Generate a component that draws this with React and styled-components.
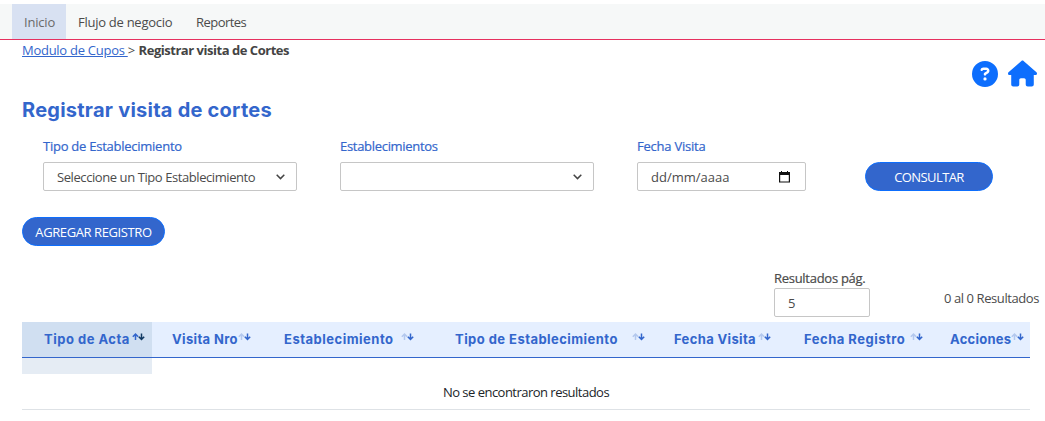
import React from "react";
import styled, { createGlobalStyle } from "styled-components";
import { FaCircleQuestion, FaHouse } from "react-icons/fa6";

const Global = createGlobalStyle`
  * { box-sizing: border-box; }
  body { margin: 0; background: #fff; color: #4b4b4b; font: 13px/18px "Open Sans", "Noto Sans", sans-serif; }
`;

const Page = styled.div`
  height: 421px;
  padding-top: 4px;
  overflow: hidden;
`;
const Label = styled.span`
  white-space: pre;
  letter-spacing: ${(p) => p.$ls || 0}px;
  -webkit-text-stroke: ${(p) => (p.$medium ? "0.2px currentColor" : "0")};
`;
const Nav = styled.nav`
  display: flex;
  height: 36px;
  padding-left: 12px;
  background: #f6f8f8;
  border-bottom: 1px solid #e6305f;
`;
const NavItem = styled.a`
  display: flex;
  align-items: center;
  padding: 1px 12px 0;
  width: ${(p) => p.$w}px;
  color: ${(p) => (p.$active ? "#6a6a6a" : "#4b4b4b")};
  background: ${(p) => (p.$active ? "#d8e1f2" : "transparent")};
`;
const Crumbs = styled.div`
  height: 20px;
  padding: 1px 0 0 22px;
  white-space: pre;
  a { color: #3366cc; text-decoration: underline; }
  b { color: #444; font-weight: 700; }
`;
const Icons = styled.div`
  display: flex;
  justify-content: flex-end;
  align-items: center;
  gap: 10px;
  height: 27px;
  padding-right: 8px;
  color: #0d6efd;
`;
const Title = styled.h1`
  margin: 13px 0 0 22px;
  font: 700 20px/20px Inter, sans-serif;
  color: #3366cc;
  height: 20px;
`;
const Filters = styled.div`
  display: flex;
  align-items: flex-end;
  margin: 17px 0 0 43px;
`;
const Field = styled.label`
  display: flex;
  flex-direction: column;
  gap: 7px;
  width: ${(p) => p.$w}px;
  margin-right: ${(p) => p.$gap}px;
  color: #3366cc;
`;
const Control = styled.div`
  display: flex;
  align-items: center;
  justify-content: space-between;
  width: ${(p) => p.$w || "100%"};
  height: 29px;
  padding: ${(p) => p.$pad || "0 11px 0 13px"};
  background: #fff;
  border: 1px solid #c6c6c6;
  border-radius: 2px;
  color: #4b4b4b;
`;
const Button = styled.button`
  display: flex;
  align-items: center;
  justify-content: center;
  width: ${(p) => p.$w}px;
  height: 29px;
  margin: ${(p) => p.$m || 0};
  padding: 1px 0 0;
  border: 1px solid #0d6efd;
  border-radius: 15px;
  background: #3366cc;
  color: #fff;
  font: 13px/18px "Open Sans", sans-serif;
`;
const Pager = styled.div`
  display: flex;
  justify-content: space-between;
  height: 53px;
  margin: 23px 6px 0 774px;
`;
const PageSize = styled.label`
  display: flex;
  flex-direction: column;
  gap: 1px;
`;
const Count = styled.div`
  padding-top: 20px;
`;
const Table = styled.div`
  width: 1008px;
  margin-left: 22px;
  border-bottom: 1px solid #dee2e6;
`;
const Head = styled.div`
  display: grid;
  grid-template-columns: 130px 112px 171px 219px 130px 146px 100px;
  height: 36px;
  background: #e5efff;
  border-bottom: 1px solid #3366cc;
`;
const HeadCell = styled.div`
  display: flex;
  justify-content: space-between;
  padding: 8px ${(p) => p.$pr}px 0 ${(p) => (p.$sorted ? 22 : 20)}px;
  background: ${(p) => (p.$sorted ? "#d0dff1" : "transparent")};
  color: #3366cc;
  font: 700 13px/18px Inter, sans-serif;
  svg { flex: none; margin-top: 3px; }
`;
const SortedGap = styled.div`
  width: 130px;
  height: 16px;
  background: #e5ecf4;
`;
const Empty = styled.div`
  height: 35px;
  padding-top: 9px;
  text-align: center;
  color: #212529;
`;

const Chevron = () => (
  <svg width="9" height="6" viewBox="0 0 9 6" fill="none" stroke="#444" strokeWidth="1.500">
    <path d="M.7 .8l3.800 3.800L8.300 .8" />
  </svg>
);
const Calendar = () => (
  <svg width="11" height="12" viewBox="0 0 11 12" fill="#111">
    <path fillRule="evenodd" d="M2 0h1v1h5V0h1v1h2v10.500H0V1h2zM1.200 4v6.400h8.600V4z" />
  </svg>
);
const Sort = ({ active }) => (
  <svg width="13" height="9" viewBox="0 0 13 9" fill="none" strokeWidth="1.500">
    <path d="M3.500 7V1.500M.8 3.800l2.700-2.700 2.700 2.700" stroke={active ? "#3366cc" : "#b3c8ee"} />
    <path d="M9.500 .5V6M6.800 3.700l2.700 2.700 2.700-2.700" stroke={active ? "#123a63" : "#3366cc"} />
  </svg>
);

const columns = [
  ["Tipo de Acta", 7, 0.5],
  ["Visita Nro", 13, 0.35],
  ["Establecimiento", 21, 0.5],
  ["Tipo de Establecimiento", 9, 0.45],
  ["Fecha Visita", 13, 0.35],
  ["Fecha Registro", 7, 0.5],
  ["Acciones", 7, 0.25],
];

export default function App() {
  return (
    <Page>
      <Global />
      <Nav>
        <NavItem $active $w={54}><Label $ls={-0.2}>Inicio</Label></NavItem>
        <NavItem $w={118}><Label $ls={-0.27}>Flujo de negocio</Label></NavItem>
        <NavItem $w={80}><Label $ls={-0.55}>Reportes</Label></NavItem>
      </Nav>
      <Crumbs>
        <a><Label $ls={-0.27}>Modulo de Cupos </Label></a>
        <Label>{"> "}</Label>
        <b><Label $ls={-0.47}>Registrar visita de Cortes</Label></b>
      </Crumbs>
      <Icons>
        <FaCircleQuestion size={26} />
        <FaHouse size={29} />
      </Icons>
      <Title><Label $ls={0.24}>Registrar visita de cortes</Label></Title>
      <Filters>
        <Field $w={254} $gap={43}>
          <Label $medium $ls={-0.25}>Tipo de Establecimiento</Label>
          <Control><Label $ls={-0.42}>Seleccione un Tipo Establecimiento</Label><Chevron /></Control>
        </Field>
        <Field $w={254} $gap={43}>
          <Label $medium $ls={-0.3}>Establecimientos</Label>
          <Control><span /><Chevron /></Control>
        </Field>
        <Field $w={169} $gap={59}>
          <Label $medium $ls={-0.22}>Fecha Visita</Label>
          <Control $pad="0 15px 0 13px"><Label>dd/mm/aaaa</Label><Calendar /></Control>
        </Field>
        <Button $w={128}><Label $ls={-0.6}>CONSULTAR</Label></Button>
      </Filters>
      <Button $w={143} $m="26px 0 0 22px"><Label $ls={-0.4}>AGREGAR REGISTRO</Label></Button>
      <Pager>
        <PageSize>
          <Label $medium $ls={-0.28}>Resultados pág.</Label>
          <Control $w="96px"><Label>5</Label></Control>
        </PageSize>
        <Count><Label $ls={-0.42}>0 al 0 Resultados</Label></Count>
      </Pager>
      <Table>
        <Head>
          {columns.map(([name, pr, ls], i) => (
            <HeadCell key={name} $pr={pr} $sorted={i === 0}>
              <Label $ls={ls}>{name}</Label>
              <Sort active={i === 0} />
            </HeadCell>
          ))}
        </Head>
        <SortedGap />
        <Empty><Label $ls={-0.52}>No se encontraron resultados</Label></Empty>
      </Table>
    </Page>
  );
}
